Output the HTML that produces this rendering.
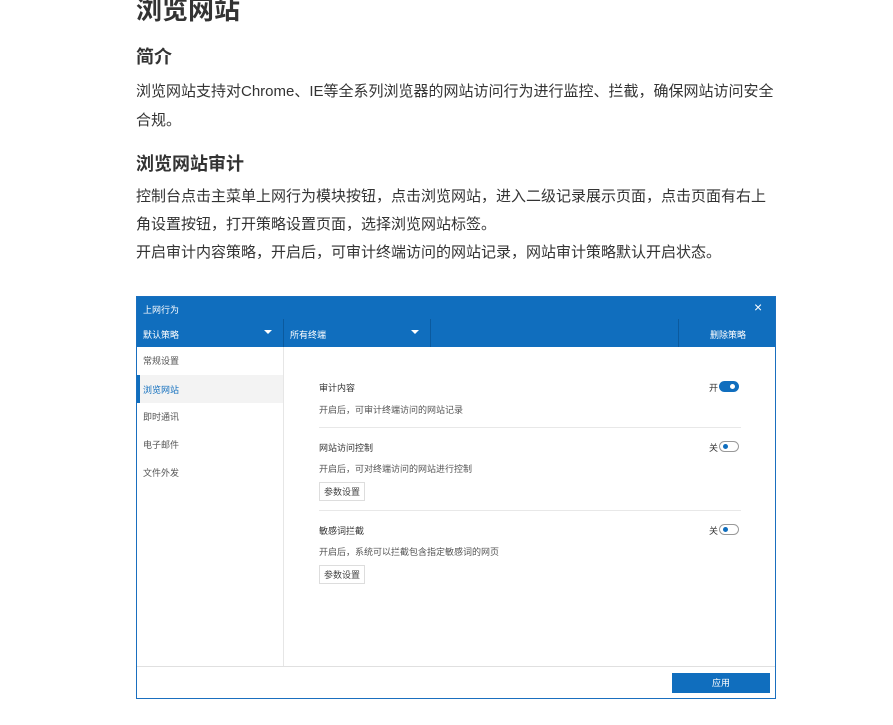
<!DOCTYPE html>
<html><head><meta charset="utf-8"><style>
*{margin:0;padding:0;box-sizing:border-box}
body{width:893px;height:725px;background:#fff;font-family:"Liberation Sans","Noto Sans CJK SC",sans-serif;color:#333;position:relative;overflow:hidden}
.a{position:absolute;white-space:nowrap}
h1{position:absolute;left:136px;top:-10px;font-size:26px;font-weight:bold;color:#333}
.h2{font-size:18px;font-weight:bold;color:#333}
.p{font-size:15px;color:#333}
.dlg{position:absolute;left:136px;top:296px;width:640px;height:403px;border:1px solid #1a6fbf;background:#fff}
.s{font-size:9px;color:#555}
.tog{position:absolute;width:20px;height:11px;border-radius:6px}
</style></head><body>
<h1>浏览网站</h1>
<div class="a h2" style="left:136px;top:43px">简介</div>
<div class="a p" style="left:136px;top:80px">浏览网站支持对Chrome、IE等全系列浏览器的网站访问行为进行监控、拦截，确保网站访问安全</div>
<div class="a p" style="left:136px;top:109px">合规。</div>
<div class="a h2" style="left:136px;top:150px">浏览网站审计</div>
<div class="a p" style="left:136px;top:185px">控制台点击主菜单上网行为模块按钮，点击浏览网站，进入二级记录展示页面，点击页面有右上</div>
<div class="a p" style="left:136px;top:213px">角设置按钮，打开策略设置页面，选择浏览网站标签。</div>
<div class="a p" style="left:136px;top:241px">开启审计内容策略，开启后，可审计终端访问的网站记录，网站审计策略默认开启状态。</div>

<div class="dlg">
 <div class="a" style="left:0;top:0;width:638px;height:22px;background:#106ebe"></div>
 <div class="a s" style="left:6px;top:6px;color:#fff">上网行为</div>
 <div class="a" style="left:617px;top:2px;color:#fff;font-size:14px">×</div>
 <div class="a" style="left:0;top:22px;width:638px;height:28px;background:#106ebe"></div>
 <div class="a" style="left:146px;top:22px;width:1px;height:28px;background:#0b5a9e"></div>
 <div class="a" style="left:293px;top:22px;width:1px;height:28px;background:#0b5a9e"></div>
 <div class="a" style="left:541px;top:22px;width:1px;height:28px;background:#0b5a9e"></div>
 <div class="a s" style="left:6px;top:31px;color:#fff">默认策略</div>
 <div class="a" style="left:127px;top:33px;border:4px solid transparent;border-top:4px solid #fff"></div>
 <div class="a s" style="left:153px;top:31px;color:#fff">所有终端</div>
 <div class="a" style="left:274px;top:33px;border:4px solid transparent;border-top:4px solid #fff"></div>
 <div class="a s" style="left:573px;top:31px;color:#fff">删除策略</div>
 <div class="a" style="left:146px;top:50px;width:1px;height:320px;background:#e6e6e6"></div>
 <div class="a s" style="left:6px;top:57px">常规设置</div>
 <div class="a" style="left:0;top:78px;width:146px;height:28px;background:#f3f3f3;border-left:3px solid #106ebe"></div>
 <div class="a s" style="left:6px;top:86px;color:#106ebe">浏览网站</div>
 <div class="a s" style="left:6px;top:113px">即时通讯</div>
 <div class="a s" style="left:6px;top:141px">电子邮件</div>
 <div class="a s" style="left:6px;top:169px">文件外发</div>

 <div class="a s" style="left:182px;top:84px;color:#333">审计内容</div>
 <div class="a s" style="left:572px;top:84px;color:#333">开</div>
 <div class="tog" style="left:582px;top:84px;background:#106ebe"><div class="a" style="left:11px;top:3px;width:5px;height:5px;border-radius:3px;background:#fff"></div></div>
 <div class="a s" style="left:182px;top:106px">开启后，可审计终端访问的网站记录</div>
 <div class="a" style="left:182px;top:130px;width:422px;height:1px;background:#e8e8e8"></div>

 <div class="a s" style="left:182px;top:144px;color:#333">网站访问控制</div>
 <div class="a s" style="left:572px;top:144px;color:#333">关</div>
 <div class="tog" style="left:582px;top:144px;border:1px solid #999"><div class="a" style="left:3px;top:2px;width:5px;height:5px;border-radius:3px;background:#106ebe"></div></div>
 <div class="a s" style="left:182px;top:165px">开启后，可对终端访问的网站进行控制</div>
 <div class="a s" style="left:182px;top:185px;border:1px solid #ddd;padding:2px 4px;color:#444">参数设置</div>
 <div class="a" style="left:182px;top:213px;width:422px;height:1px;background:#e8e8e8"></div>

 <div class="a s" style="left:182px;top:227px;color:#333">敏感词拦截</div>
 <div class="a s" style="left:572px;top:227px;color:#333">关</div>
 <div class="tog" style="left:582px;top:227px;border:1px solid #999"><div class="a" style="left:3px;top:2px;width:5px;height:5px;border-radius:3px;background:#106ebe"></div></div>
 <div class="a s" style="left:182px;top:248px">开启后，系统可以拦截包含指定敏感词的网页</div>
 <div class="a s" style="left:182px;top:268px;border:1px solid #ddd;padding:2px 4px;color:#444">参数设置</div>

 <div class="a" style="left:0;top:369px;width:638px;height:1px;background:#e0e0e0"></div>
 <div class="a" style="left:535px;top:376px;width:98px;height:20px;background:#106ebe;color:#fff;font-size:9px;text-align:center;line-height:20px">应用</div>
</div>
</body></html>
